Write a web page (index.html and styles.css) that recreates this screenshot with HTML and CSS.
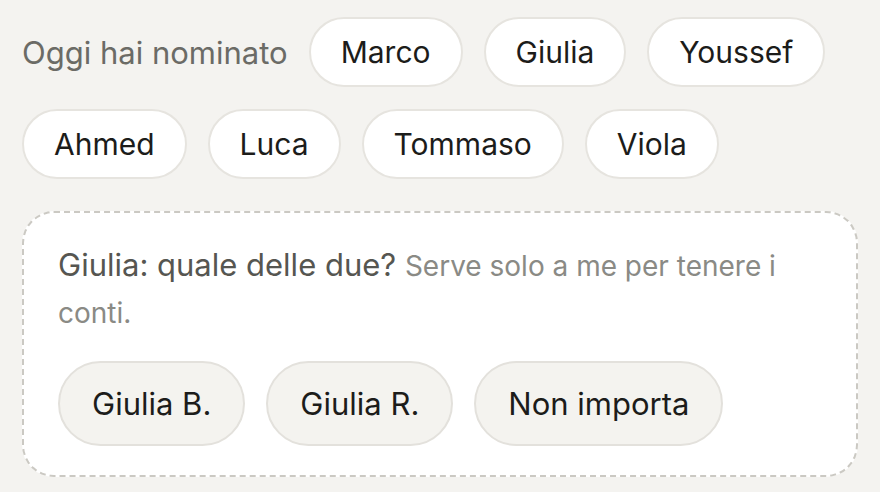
FILE: index.html
```html
<!DOCTYPE html>
<html lang="it">
<head>
<meta charset="utf-8">
<title>Nominati</title>
<link rel="stylesheet" href="styles.css">
</head>
<body>
<div class="page">
  <div class="names">
    <span class="label">Oggi hai nominato</span>
    <span class="chip">Marco</span>
    <span class="chip">Giulia</span>
    <span class="chip">Youssef</span>
    <span class="chip">Ahmed</span>
    <span class="chip">Luca</span>
    <span class="chip">Tommaso</span>
    <span class="chip">Viola</span>
  </div>
  <div class="ask">
    <p class="question">Giulia: quale delle due? <span class="hint">Serve solo a me per tenere i conti.</span></p>
    <div class="choices">
      <button class="choice">Giulia B.</button>
      <button class="choice">Giulia R.</button>
      <button class="choice">Non importa</button>
    </div>
  </div>
</div>
</body>
</html>
```

FILE: styles.css
```css
html, body {
    margin: 0;
    background: #f4f3f0;
}
body {
    font-family: Inter, "Noto Sans", sans-serif;
    color: #1c1c1a;
}
.page {
    padding: 17px 22px;
}
.names {
    display: flex;
    flex-wrap: wrap;
    align-items: center;
    gap: 22px 21px;
}
.label {
    font-size: 31px;
    color: #6b6b66;
}
.chip {
    display: inline-block;
    background: #fff;
    border: 2px solid #e6e4df;
    border-radius: 40px;
    font-size: 30px;
    line-height: 36px;
    padding: 15px 30px;
}
.ask {
    margin-top: 32px;
    background: #fff;
    border: 2px dashed #cbc9c3;
    border-radius: 32px;
    padding: 29px 34px 29px;
}
.question {
    margin: 0;
    font-size: 31px;
    line-height: 45px;
    color: #565651;
}
.hint {
    font-size: 28px;
    color: #8a8a85;
}
.choices {
    display: flex;
    gap: 21px;
    margin-top: 25px;
}
.choice {
    font-family: inherit;
    font-size: 31px;
    line-height: 37px;
    color: #1c1c1a;
    background: #f4f3ef;
    border: 2px solid #e3e1dc;
    border-radius: 44px;
    padding: 22px 32px;
}
```
